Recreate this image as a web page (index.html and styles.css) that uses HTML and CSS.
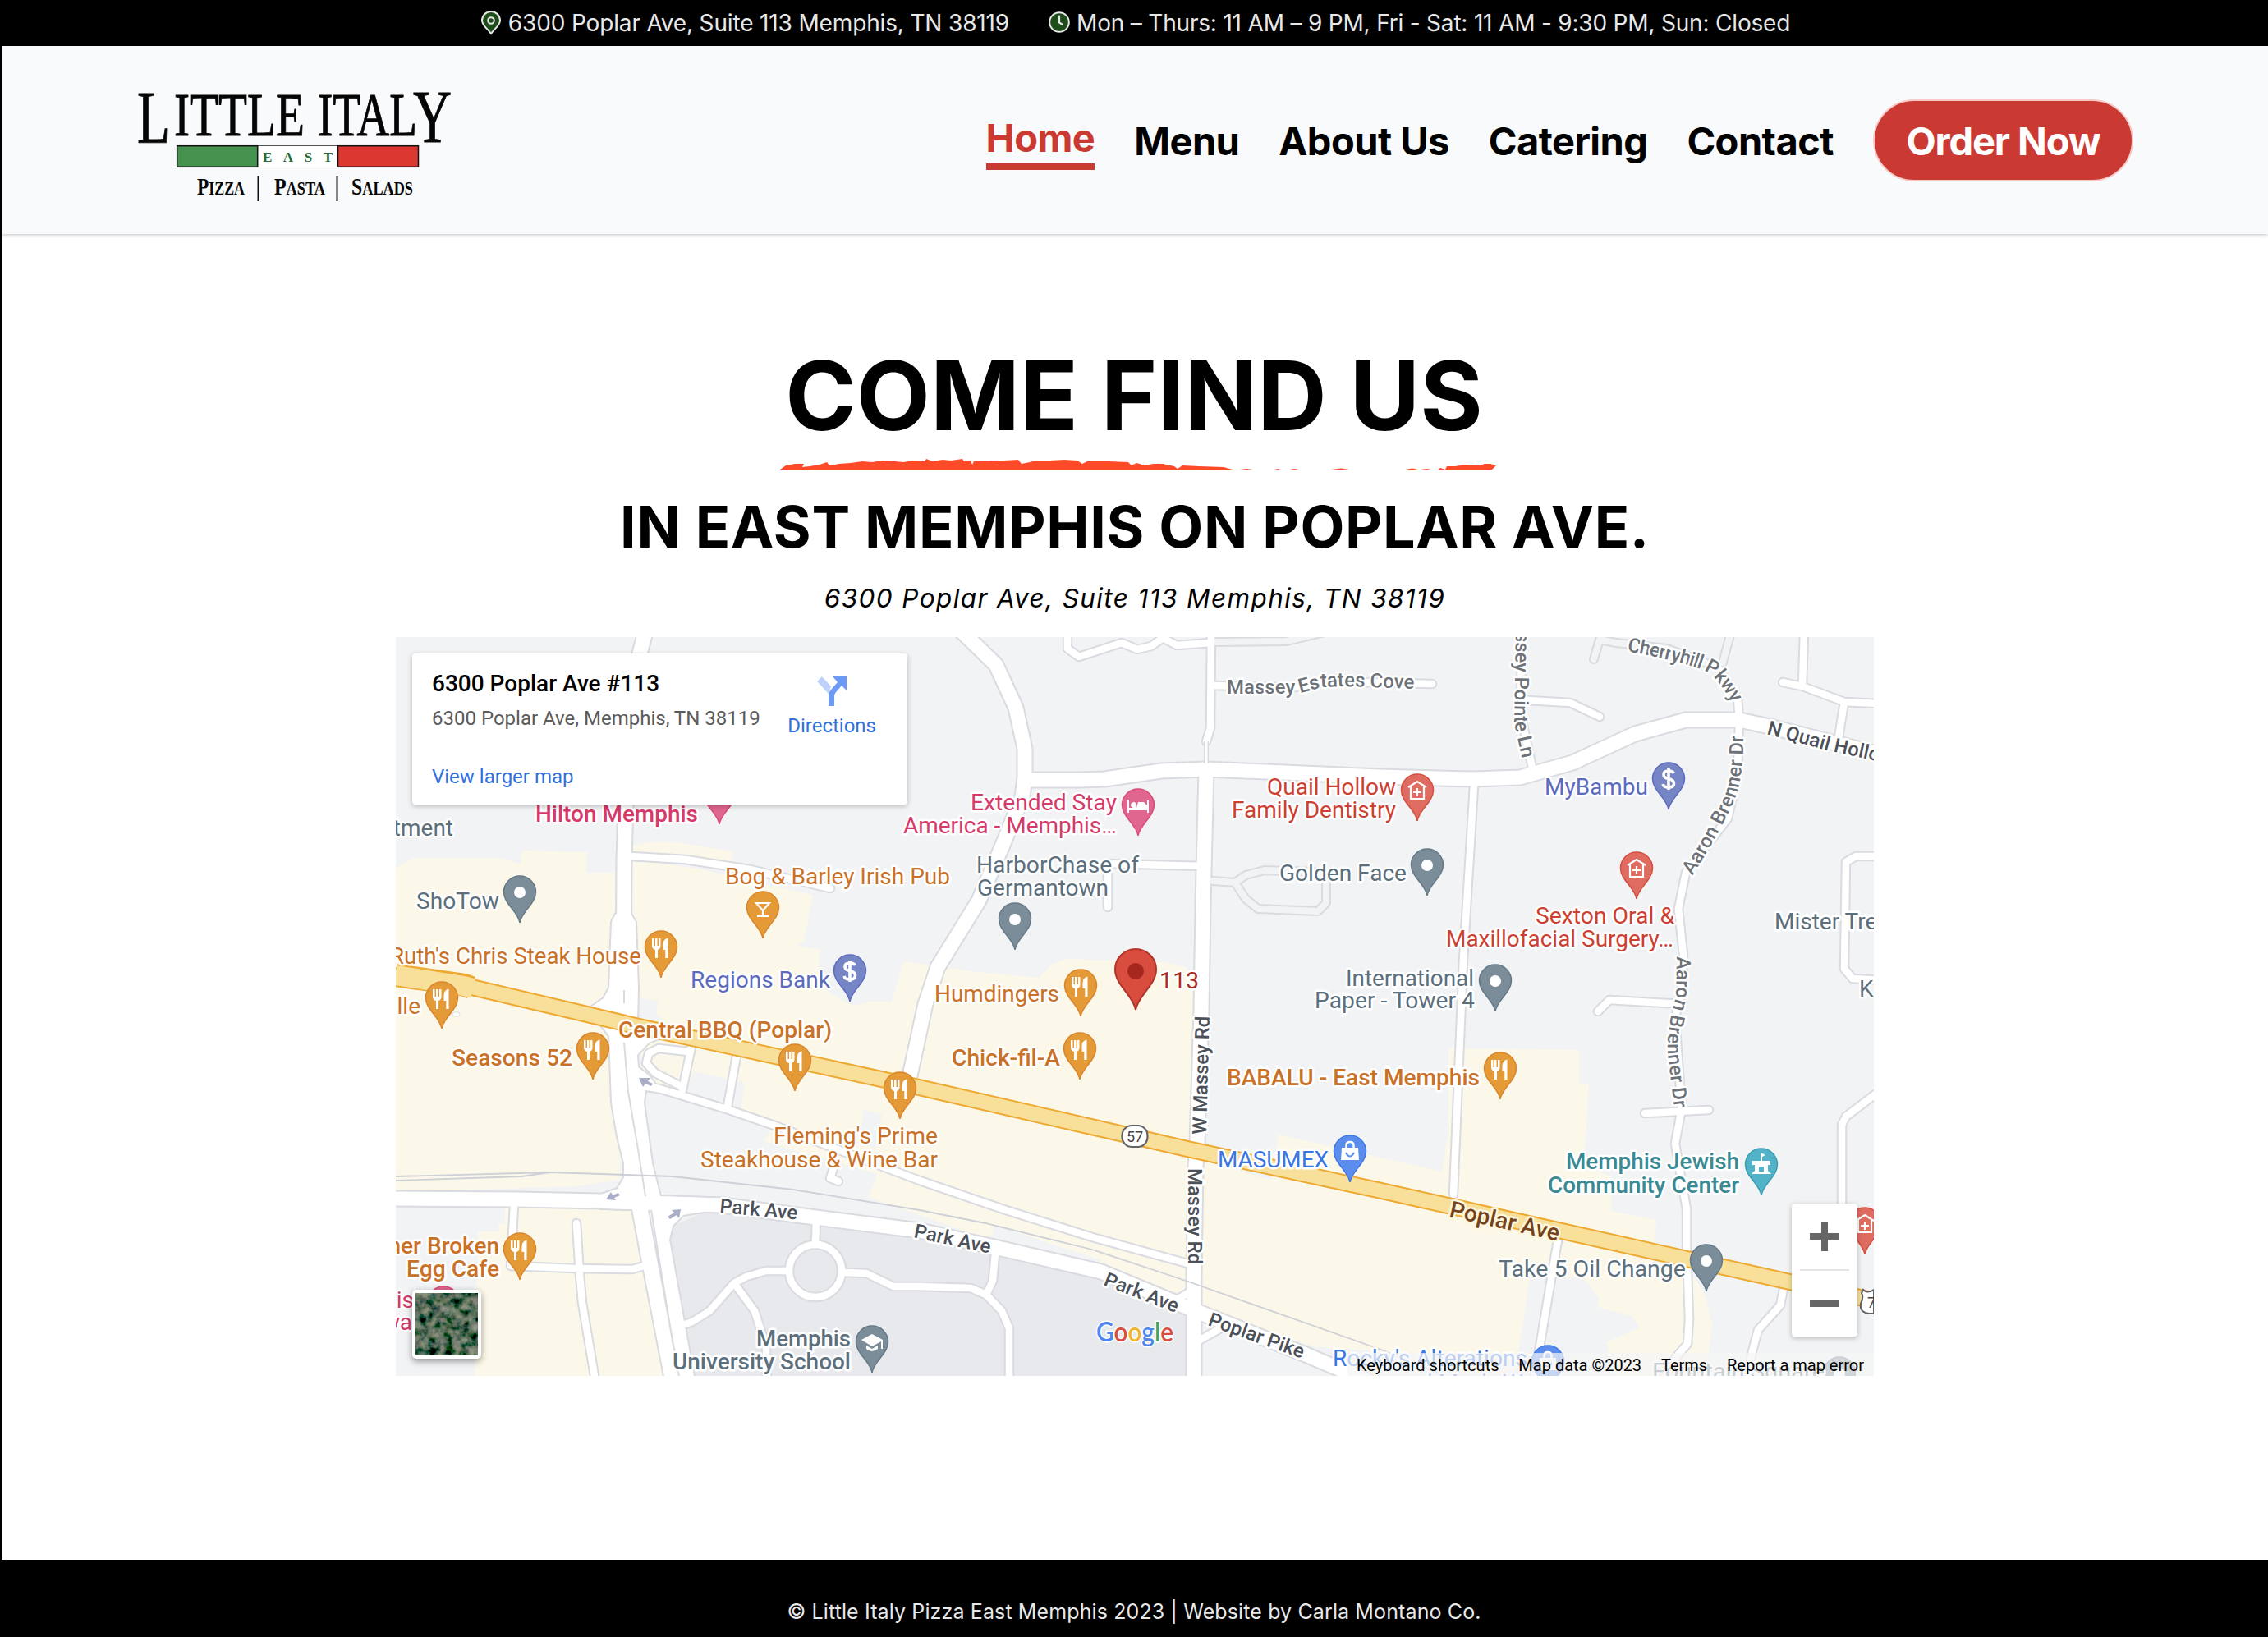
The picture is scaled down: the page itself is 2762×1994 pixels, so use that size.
FILE: index.html
```html
<!DOCTYPE html>
<html lang="en">
<head>
<meta charset="utf-8">
<title>Little Italy East – Come Find Us</title>
<link rel="stylesheet" href="styles.css">
</head>
<body>
<div class="topbar">
  <div class="topbar-item">
    <svg class="topbar-icon" viewBox="0 0 26 30"><path d="M13 28C9 22 2 18 2 12A11 11 0 0 1 24 12C24 18 17 22 13 28Z" fill="#1f4d1a" stroke="#e8e8e8" stroke-width="2"/><circle cx="13" cy="12" r="3.800" fill="none" stroke="#e8e8e8" stroke-width="2"/></svg>
    <span class="topbar-address">6300 Poplar Ave, Suite 113 Memphis, TN 38119</span>
  </div>
  <div class="topbar-item">
    <svg class="topbar-icon" viewBox="0 0 26 30"><circle cx="13" cy="14" r="11.800" fill="#1f4d1a" stroke="#e8e8e8" stroke-width="2"/><path d="M13 6.500V14.500L17 17" fill="none" stroke="#e8e8e8" stroke-width="2.200" stroke-linecap="round"/></svg>
    <span class="topbar-hours">Mon – Thurs: 11 AM – 9 PM, Fri - Sat: 11 AM - 9:30 PM, Sun: Closed</span>
  </div>
</div>

<div class="page">
<header class="header">
  <svg class="logo" viewBox="160 100 400 160">
    <g class="logo-name">
      <text x="167" y="173.500" font-size="92" textLength="40" lengthAdjust="spacingAndGlyphs">L</text>
      <text x="212" y="165" font-size="73" textLength="159" lengthAdjust="spacingAndGlyphs">ITTLE</text>
      <text x="387" y="165" font-size="73" textLength="121" lengthAdjust="spacingAndGlyphs">ITAL</text>
      <text x="503" y="173" font-size="91" textLength="47" lengthAdjust="spacingAndGlyphs">Y</text>
    </g>
    <rect x="215.500" y="177.500" width="294" height="26" fill="#fff" stroke="#555"/>
    <rect x="215.700" y="177.700" width="98" height="25.600" fill="#45934f" stroke="#111" stroke-width="1.500"/>
    <rect x="411.500" y="177.700" width="98" height="25.600" fill="#dc3832" stroke="#111" stroke-width="1.500"/>
    <text class="logo-east" x="320" y="196.500" textLength="85">EAST</text>
    <g class="logo-tag">
      <text x="240" y="237" textLength="58" lengthAdjust="spacingAndGlyphs">P<tspan class="small">IZZA</tspan></text>
      <text x="334" y="237" textLength="62" lengthAdjust="spacingAndGlyphs">P<tspan class="small">ASTA</tspan></text>
      <text x="428" y="237" textLength="75" lengthAdjust="spacingAndGlyphs">S<tspan class="small">ALADS</tspan></text>
    </g>
    <path d="M314.500 214V245M410.500 214V245" stroke="#111" stroke-width="2"/>
  </svg>
  <nav class="nav">
    <a class="nav-link active">Home</a>
    <a class="nav-link">Menu</a>
    <a class="nav-link">About Us</a>
    <a class="nav-link">Catering</a>
    <a class="nav-link">Contact</a>
    <a class="order">Order Now</a>
  </nav>
</header>

<main class="main">
  <h1 class="title">COME FIND US</h1>
  <svg class="brush" viewBox="950 558 874 14"><path fill="#ff4a2a" d="M950 572L957 567L968 565L979 565L977 569L986 568L998 566L1007 563L1010 567L1022 565L1036 564L1050 562L1062 563L1075 561L1090 562L1100 563L1112 561L1126 562L1128 559L1136 562L1148 560L1158 561L1172 559L1174 562L1182 561L1184 566L1186 562L1205 562L1240 560L1244 565L1254 563L1262 561L1278 561L1296 560L1312 561L1318 565L1324 562L1350 562L1374 563L1378 567L1384 564L1394 567L1404 565L1416 565L1430 568L1434 571L1440 567L1460 568L1490 569L1501 572ZM1510 572L1518 571L1527 572ZM1552 572L1556 571L1560 572ZM1571 572L1576 571L1582 572ZM1621 572L1633 570.500L1643 572ZM1711 572L1720 570.500L1727 572ZM1730 572L1738 571L1743 572ZM1751 572L1754 570L1760 572L1762 568L1772 568L1785 566L1802 567L1808 565L1815 565L1822 567L1817 572Z"/></svg>
  <h2 class="subtitle">IN EAST MEMPHIS ON POPLAR AVE.</h2>
  <p class="address">6300 Poplar Ave, Suite 113 Memphis, TN 38119</p>

  <section class="map">
    <svg class="map-canvas" viewBox="482 776 1800 900">
      <defs>
        <path id="pin" d="M0 0C-2 -14 -19.500 -23 -19.500 -37.500A19.500 19.500 0 0 1 19.500 -37.500C19.500 -23 2 -14 0 0Z"/>
        <g id="dot"><use href="#pin"/><circle cy="-37" r="7" fill="#fff" stroke="none"/></g>
        <g id="food"><use href="#pin"/><path stroke="none" fill="#fff" d="M-11 -48h2.500v9h1.500v-9h2.500v9h1.500v-9h2.500v9q0 4 -3.500 5v10h-3v-10q-4 -1 -4 -5zM2.500 -41q0 -6 6 -7.500v24.500h-3.200v-10h-2.800z"/></g>
        <g id="bank"><use href="#pin"/><path d="M6.500 -44Q5 -47 0 -47Q-6 -47 -6 -42.500Q-6 -38.500 0 -37.500Q6.500 -36 6.500 -31.500Q6.500 -27 0 -27Q-6 -27 -7 -31M0 -50V-24" fill="none" stroke="#fff" stroke-width="3.600"/></g>
        <g id="clinic"><use href="#pin"/><path d="M-8 -42V-27H8V-42M-11 -41L0 -48L11 -41M0 -40V-30M-5 -35H5" fill="none" stroke="#fff" stroke-width="2.200"/></g>
        <g id="bag"><use href="#pin"/><path d="M-10 -42H10L11 -27H-11Z" fill="#fff" stroke="none"/><path d="M-4.500 -42V-45Q-4.500 -49 0 -49Q4.500 -49 4.500 -45V-42" fill="none" stroke="#fff" stroke-width="2.400"/><path d="M-5 -36Q0 -27 5 -36" fill="none" stroke="#5b8def" stroke-width="2.200"/></g>
      </defs>
      <rect x="482" y="776" width="1800" height="900" fill="#f1f3f5"/>

      <!-- commercial blocks -->
      <g fill="#fcf8e9">
        <path d="M482 1057L504 1045H611L634 1053L635 1036L715 1038L714 1063H755V1437L702 1445L482 1452Z"/>
        <path d="M615 1465V1491H607V1500H582L580 1587L578 1676H812L775 1465Z"/>
        <path d="M770 1030L790 1026H823L894 1037L890 1050L770 1043Z"/>
        <path d="M768 1047L851 1058L929 1077L990 1090L979 1147L970 1152L999 1157L995 1197L1015 1213L1039 1225L1060 1220H1086L1100 1171L1190 1184L1265 1191L1280 1175L1299 1168L1418 1172L1443 1178L1462 1195V1400L1553 1407L1557 1382L1680 1410L1756 1427L1764 1380V1277L1923 1279V1319L1935 1320L1929 1420L1962 1433V1475L2017 1486L2013 1540L2065 1557L2077 1580L2085 1613L2077 1676H1968L1956 1635L1997 1617L1987 1603L1945 1592L1948 1582L1929 1557L1863 1553L1845 1676L1689 1647L1597 1640L1462 1590L1430 1580L1339 1546L1341 1535L1211 1492L1207 1509L1196 1507L1058 1458L1068 1430L929 1390L945 1370L785 1322L776 1240Z"/>
      </g>
      <g fill="#f1f3f5">
        <path d="M776 1215L802 1219L799 1236L812 1245L776 1240ZM845 1305L907 1319L902 1353L835 1330ZM1051 1352L1074 1357L1066 1400L1047 1390Z"/>
        <path d="M1479 1412L1550 1428L1547 1437L1479 1418Z"/>
      </g>
      <path fill="#e8e9ed" d="M857 1477L819 1493L815 1510L845 1676H1454V1600L1341 1553L1211 1522L1100 1500L900 1475Z"/>

      <!-- road centre lines, grouped by width -->
      <defs>
        <g id="wide">
          <path d="M786 770L779 796L762 980L760 1047L759 1240"/>
          <path d="M482 1460L631 1461L729 1463L804 1466L880 1468L970 1480L1120 1499L1211 1519L1341 1549L1433 1587L1454 1596L1590 1650L1665 1682"/>
          <path d="M1172 770L1213 810L1237 862L1248 912V947L1245 970L1222 1027L1192 1097L1142 1178L1127 1223L1107 1315"/>
          <path d="M1250 950H1314L1345 949L1414 939L1469 937L1680 946L1793 949L1851 947L1915 929L1991 894L2053 877H2118L2155 885L2290 919"/>
          <path d="M1469 937L1465 1103L1463 1230L1458 1393L1456 1420L1454 1553V1682"/>
        </g>
        <g id="narrow">
          <path d="M1475 770L1474 887L1469 903"/>
          <path d="M1300 770V790L1314 800L1366 783L1385 791L1402 787L1416 777L1433 786L1475 783"/>
          <path d="M1475 835L1578 837L1617 830L1744 833"/>
          <path d="M1795 957L1782 1170L1770 1455"/>
          <path d="M1853 770L1852 870L1867 940M1860 853L1912 856L1948 873"/>
          <path d="M2092 813L2116 850L2118 877M2118 877L2116 943L2104 997L2053 1063L2044 1107L2050 1163L2048 1203L2040 1240L2048 1350L2040 1393L2054 1473V1520L2057 1607L2055 1637L2042 1652L2025 1680"/>
          <path d="M2003 1356L2081 1352M1946 1232L1960 1218L2048 1223"/>
          <path d="M2197 770L2195 835M2171 831L2195 836L2246 855L2290 857M2246 855L2238 905"/>
          <path d="M2290 1043H2260L2248 1050L2246 1180L2256 1192L2290 1194"/>
          <path d="M2290 1328L2248 1360L2243 1370V1560M2172 1570L2168 1590L2141 1620L2133 1650L2128 1682"/>
          <path d="M1898 1505L1874 1647L1868 1682"/>
          <path d="M1465 1055L1349 1052V1105"/>
          <path d="M768 1043L835 1047L913 1059L1011 1082"/>
          <path d="M626 1468L622 1542L700 1545L770 1546L788 1541M702 1490L706 1553L709 1587L725 1682"/>
          <path d="M994 1485L993 1516M958 1548H933L909 1555L894 1563L864 1597L843 1610L829 1615M894 1563L919 1597L933 1640L934 1682"/>
          <circle cx="993" cy="1548" r="32"/>
          <path d="M1029 1550L1055 1551L1088 1567H1120L1182 1569L1201 1577L1220 1597L1229 1618V1682M1212 1527L1209 1560L1202 1575"/>
          <path d="M785 1322L806 1327L888 1352L949 1373L1051 1412L1120 1438L1222 1473L1330 1507L1450 1540"/>
          <path d="M898 1280L886 1348M843 1270L831 1328M838 1281L802 1277L790 1283L787 1295L798 1307L831 1324"/>
          <path d="M1015 1423L1011 1435L1021 1439M1425 1588L1452 1572M1458 1634L1490 1616"/>
        </g>
        <g id="private">
          <path d="M1475 782L1567 781L1613 770"/>
          <path d="M1941 803L1948 779L1968 783L2030 790L2092 813M2098 807L2108 770"/>
          <path d="M1477 1073L1504 1075L1517 1066L1540 1060L1605 1062L1615 1070V1100L1605 1110L1532 1107L1517 1095L1504 1075"/>
        </g>
        <path id="poplar" d="M476 1188L568 1201L717 1236L776 1250L1117 1324L1366 1381L1448 1400L1680 1450L2182 1562L2290 1586"/>
        <path id="station" d="M750 1113L745 1123L742 1203L735 1216L718 1228L730 1246L742 1262L745 1343L752 1385L760 1417V1434L752 1448L732 1455V1472L770 1473L782 1537L810 1682H846L815 1510L819 1493L832 1480L857 1476L890 1460L804 1457L794 1417L784 1343L786 1328L806 1331L790 1310L777 1300L776 1285L790 1270L810 1262L776 1245L777 1203L774 1123L768 1113Z"/>
      </defs>
      <use href="#private" class="road private-edge"/>
      <use href="#narrow" class="road narrow-edge"/>
      <use href="#wide" class="road wide-edge"/>
      <use href="#station" fill="#fff" stroke="#d9dbe0" stroke-width="4"/>
      <use href="#private" class="road private-fill"/>
      <use href="#narrow" class="road narrow-fill"/>
      <use href="#wide" class="road wide-fill"/>
      <use href="#station" fill="#fff"/>
      <path d="M1469 903V930" stroke="#d9dbe0" stroke-width="6"/><path d="M1469 903V932" stroke="#fff" stroke-width="3"/>
      <path d="M760 1206V1222M760 1270L765 1330L777 1400L786 1457M790 1474L827 1676M793 1474L820 1640" class="hair"/>
      <path d="M482 1438L635 1433L670 1428L762 1431L819 1433L966 1449L1120 1474L1200 1490L1330 1522L1444 1560L1682 1644L1760 1676M482 1433L670 1428" class="rail"/>
      <use href="#poplar" class="road poplar-edge"/>
      <path d="M482 1188L566 1200L574 1203" stroke="#eda932" stroke-width="28" fill="none"/>
      <use href="#poplar" class="road poplar-fill"/>
      <path d="M482 1188L565 1201L576 1204" stroke="#f8e09a" stroke-width="24" fill="none"/>
      <g fill="#a9aec6"><path d="M778 1313L792 1313L789 1317L795 1320L793 1323L786 1320L783 1324Z"/><path d="M738 1461L744 1452L746 1456L753 1453L755 1456L748 1459L750 1462Z"/><path d="M829 1473L818 1474L821 1477L813 1482L816 1485L824 1480L827 1484Z"/></g>
      <rect x="551" y="1233" width="9" height="5" rx="2.500" fill="#fff" stroke="#d9dbe0"/>

      <!-- route shields -->
      <rect x="1366.500" y="1371" width="31" height="26" rx="12" fill="#fff" stroke="#5f6368" stroke-width="2.200"/>
      <text x="1372" y="1390.500" class="shield" textLength="20">57</text>
      <path d="M2269 1571Q2274 1576 2282 1571V1600Q2264 1601 2266 1588Q2270 1580 2267 1575Z" fill="#fff" stroke="#5f6368" stroke-width="2"/>
      <text x="2274" y="1593" class="shield">7</text>

      <!-- street names -->
      <defs>
        <path id="p-estates" d="M1494 845L1572 845L1588 843L1611 837L1640 836L1725 839"/>
        <path id="p-pointe" d="M1846 770L1844 880L1856 935"/>
        <path id="p-cherry" d="M1981 793Q2060 808 2082 820Q2096 832 2113 862"/>
        <path id="p-aaron1" d="M2061 1067Q2109 990 2117 960Q2124 930 2123 890"/>
        <path id="p-aaron2" d="M2042 1165L2041 1215Q2026 1262 2033 1300L2040 1360"/>
        <path id="p-quail" d="M2151 894L2225 914L2300 930"/>
      </defs>
      <g class="street">
        <text transform="translate(876 1477) rotate(5)" textLength="95">Park Ave</text>
        <text transform="translate(1112 1507) rotate(12)" textLength="95">Park Ave</text>
        <text transform="translate(1343 1565) rotate(21)" textLength="95">Park Ave</text>
        <text transform="translate(1470 1614) rotate(19.500)" textLength="122">Poplar Pike</text>
        <text transform="translate(1469 1382) rotate(-88.500)" textLength="144">W Massey Rd</text>
        <text transform="translate(1447 1423) rotate(90)" textLength="117">Massey Rd</text>
        <text><textPath href="#p-quail">N Quail Hollow</textPath></text>
        <text class="poplar-name" transform="translate(1764 1482) rotate(12.500)" textLength="136">Poplar Ave</text>
      </g>
      <g class="street minor">
        <text textLength="229"><textPath href="#p-estates">Massey Estates Cove</textPath></text>
        <text textLength="155"><textPath href="#p-pointe">ssey Pointe Ln</textPath></text>
        <text textLength="151"><textPath href="#p-cherry">Cherryhill Pkwy</textPath></text>
        <text textLength="186"><textPath href="#p-aaron1">Aaron Brenner Dr</textPath></text>
        <text textLength="186"><textPath href="#p-aaron2">Aaron Brenner Dr</textPath></text>
      </g>

      <!-- pins -->
      <g class="slate-pin">
        <use href="#dot" x="633" y="1124"/><use href="#dot" x="1236" y="1157"/><use href="#dot" x="1738" y="1091"/><use href="#dot" x="1821" y="1232"/><use href="#dot" x="2078" y="1573"/><use href="#dot" x="2240" y="1710"/>
        <use href="#pin" x="1062" y="1672"/><path stroke="none" fill="#fff" d="M1049 1632L1062 1625L1075 1632V1643H1073V1634L1062 1640ZM1055 1639L1062 1643L1069 1639V1643Q1062 1649 1055 1643Z"/>
      </g>
      <g class="food-pin">
        <use href="#food" x="805" y="1191"/><use href="#food" x="538" y="1253"/><use href="#food" x="722" y="1315"/><use href="#food" x="968" y="1329"/><use href="#food" x="1096" y="1363"/><use href="#food" x="633" y="1559"/><use href="#food" x="1316" y="1238"/><use href="#food" x="1315" y="1315"/><use href="#food" x="1827" y="1339"/>
        <use href="#pin" x="929" y="1143"/><path fill="none" stroke="#fff" stroke-width="2.200" d="M921 1100H937L929 1109ZM929 1108V1116M922 1116H936"/>
      </g>
      <g class="bank-pin"><use href="#bank" x="1035" y="1220"/><use href="#bank" x="2032" y="986"/></g>
      <g class="clinic-pin"><use href="#clinic" x="1726" y="1000"/><use href="#clinic" x="1993" y="1095"/><use href="#clinic" x="2271" y="1528"/></g>
      <g class="hotel-pin">
        <use href="#pin" x="876" y="1004"/><use href="#pin" x="540" y="1624"/>
        <use href="#pin" x="1386" y="1018"/><path stroke="none" fill="#fff" d="M1373 974H1375V984H1380Q1377 983 1377 980Q1378 977 1381 977Q1384 977 1384 984L1386 977H1393L1397 981V975H1399V990H1397V987H1375V990H1373Z"/>
      </g>
      <g class="shop-pin"><use href="#bag" x="1644" y="1440"/><use href="#bag" x="1885" y="1696"/></g>
      <g class="civic-pin"><use href="#pin" x="2145" y="1456"/><path stroke="none" fill="#fff" d="M2144 1404L2150 1407L2146 1409V1414H2156V1419H2153V1426L2157 1430H2133L2137 1426V1419H2134V1414H2144Z"/><rect x="2142" y="1421" width="6" height="6" fill="#52b2c8" stroke="none"/></g>
      <path d="M1383 1230C1380 1212 1358 1200 1358 1181A25 25 0 0 1 1408 1181C1408 1200 1386 1212 1383 1230Z" fill="#d84d3e" stroke="#b3342a" stroke-width="2"/>
      <circle cx="1383" cy="1183" r="10" fill="#a5271d"/>

      <!-- place names -->
      <g transform="translate(0 .8)">
      <g class="label hotel">
        <text class="strong" x="652" y="1000" textLength="198" lengthAdjust="spacingAndGlyphs">Hilton Memphis</text>
        <text x="1182" y="986" textLength="178" lengthAdjust="spacingAndGlyphs">Extended Stay</text>
        <text x="1100" y="1014" textLength="260" lengthAdjust="spacingAndGlyphs">America - Memphis…</text>
        <text x="504" y="1592" text-anchor="end">is</text><text x="502" y="1619" text-anchor="end">va</text>
      </g>
      <g class="label slate">
        <text x="552" y="1017" text-anchor="end">tment</text>
        <text x="507" y="1106" textLength="101" lengthAdjust="spacingAndGlyphs">ShoTow</text>
        <text x="1189" y="1062" textLength="198" lengthAdjust="spacingAndGlyphs">HarborChase of</text>
        <text x="1190" y="1090" textLength="160" lengthAdjust="spacingAndGlyphs">Germantown</text>
        <text x="1558" y="1072" textLength="155" lengthAdjust="spacingAndGlyphs">Golden Face</text>
        <text x="1639" y="1200" textLength="156" lengthAdjust="spacingAndGlyphs">International</text>
        <text x="1601" y="1227" textLength="195" lengthAdjust="spacingAndGlyphs">Paper - Tower 4</text>
        <text x="2161" y="1131">Mister Tree</text><text x="2264" y="1213">K</text>
        <text x="1825" y="1554" class="mid" textLength="228" lengthAdjust="spacingAndGlyphs">Take 5 Oil Change</text>
        <text x="921" y="1639" class="strong" textLength="115" lengthAdjust="spacingAndGlyphs">Memphis</text>
        <text x="819" y="1667" class="strong" textLength="217" lengthAdjust="spacingAndGlyphs">University School</text>
        <text x="2012" y="1679" textLength="210" lengthAdjust="spacingAndGlyphs">Fountain Square</text>
      </g>
      <g class="label food">
        <text x="475" y="1173" textLength="306" lengthAdjust="spacingAndGlyphs">Ruth's Chris Steak House</text>
        <text x="883" y="1076" textLength="274" lengthAdjust="spacingAndGlyphs">Bog &amp; Barley Irish Pub</text>
        <text x="512" y="1234" text-anchor="end">ille</text>
        <text x="550" y="1297" class="strong" textLength="147" lengthAdjust="spacingAndGlyphs">Seasons 52</text>
        <text x="753" y="1263" class="strong" textLength="260" lengthAdjust="spacingAndGlyphs">Central BBQ (Poplar)</text>
        <text x="942" y="1392" textLength="200" lengthAdjust="spacingAndGlyphs">Fleming's Prime</text>
        <text x="853" y="1421" textLength="289" lengthAdjust="spacingAndGlyphs">Steakhouse &amp; Wine Bar</text>
        <text x="608" y="1526" class="strong" text-anchor="end">ner Broken</text>
        <text x="495" y="1554" class="strong" textLength="113" lengthAdjust="spacingAndGlyphs">Egg Cafe</text>
        <text x="1138" y="1219" textLength="152" lengthAdjust="spacingAndGlyphs">Humdingers</text>
        <text x="1159" y="1297" class="strong" textLength="132" lengthAdjust="spacingAndGlyphs">Chick-fil-A</text>
        <text x="1494" y="1321" class="strong" textLength="308" lengthAdjust="spacingAndGlyphs">BABALU - East Memphis</text>
      </g>
      <g class="label bank">
        <text x="841" y="1202" textLength="170" lengthAdjust="spacingAndGlyphs">Regions Bank</text>
        <text x="1881" y="967" textLength="126" lengthAdjust="spacingAndGlyphs">MyBambu</text>
      </g>
      <g class="label clinic">
        <text x="1543" y="967" textLength="157" lengthAdjust="spacingAndGlyphs">Quail Hollow</text>
        <text x="1500" y="995" textLength="200" lengthAdjust="spacingAndGlyphs">Family Dentistry</text>
        <text x="1870" y="1124" textLength="169" lengthAdjust="spacingAndGlyphs">Sexton Oral &amp;</text>
        <text x="1761" y="1152" textLength="277" lengthAdjust="spacingAndGlyphs">Maxillofacial Surgery…</text>
      </g>
      <g class="label shop">
        <text x="1483" y="1421" class="mid" textLength="135" lengthAdjust="spacingAndGlyphs">MASUMEX</text>
        <text x="1623" y="1663" class="mid" textLength="237" lengthAdjust="spacingAndGlyphs">Rocky's Alterations</text>
        <text x="1698" y="1693">and Men's W</text>
      </g>
      <g class="label civic">
        <text x="1907" y="1423" class="strong" textLength="211" lengthAdjust="spacingAndGlyphs">Memphis Jewish</text>
        <text x="1885" y="1452" class="strong" textLength="233" lengthAdjust="spacingAndGlyphs">Community Center</text>
      </g>
      <g class="label"><text x="1412" y="1203" fill="#a82a20" textLength="48">113</text></g>
      </g>
      <text class="google" x="1335" y="1634" textLength="94" lengthAdjust="spacingAndGlyphs"><tspan fill="#4c86ee">G</tspan><tspan fill="#d94c40">o</tspan><tspan fill="#efb632">o</tspan><tspan fill="#4c86ee">g</tspan><tspan fill="#4ba35a">l</tspan><tspan fill="#d94c40">e</tspan></text>
    </svg>

    <div class="place-card">
      <div class="place-info">
        <div class="place-name">6300 Poplar Ave #113</div>
        <div class="place-address">6300 Poplar Ave, Memphis, TN 38119</div>
        <a class="place-link">View larger map</a>
      </div>
      <a class="directions">
        <svg viewBox="0 0 36 36"><path d="M0 6L6 0L17 12L14 21Z" fill="#bdd1fb"/><path d="M14 36V24Q14 19 17 16L25 7L19 0H36V17L30 11L23 19Q21 21 21 25V36Z" fill="#6c9af5"/></svg>
        Directions
      </a>
    </div>

    <svg class="satellite" viewBox="0 0 84 84">
      <filter id="ground" x="0" y="0" width="100%" height="100%"><feTurbulence type="fractalNoise" baseFrequency=".1" numOctaves="4" seed="8"/><feColorMatrix values=".75 .1 0 0 -.11  .6 .2 0 0 -.07  .5 .1 .1 0 -.08  0 0 0 0 1"/><feComponentTransfer><feFuncR type="linear" slope=".85" intercept="-.17"/><feFuncG type="linear" slope=".85" intercept="-.13"/><feFuncB type="linear" slope=".85" intercept="-.13"/></feComponentTransfer></filter>
      <rect width="84" height="84" rx="5" fill="#fff"/><rect x="4" y="4" width="76" height="76" fill="#4b5549" filter="url(#ground)"/>
    </svg>

    <div class="zoom">
      <svg viewBox="0 0 36 36"><path d="M14 0h8v14h14v8H22v14h-8V22H0v-8h14z" fill="#666"/></svg>
      <div class="zoom-line"></div>
      <svg viewBox="0 0 36 36"><path d="M0 14h36v8H0z" fill="#666"/></svg>
    </div>

    <div class="attribution"><span>Keyboard shortcuts</span><span>Map data ©2023</span><span>Terms</span><span>Report a map error</span></div>
  </section>
</main>
</div>

<footer class="footer">© Little Italy Pizza East Memphis 2023 | Website by Carla Montano Co.</footer>
</body>
</html>
```
FILE: styles.css
```css
* { box-sizing: border-box; }
body { margin: 0; width: 2762px; height: 1994px; display: flex; flex-direction: column; overflow: hidden; background: #fff; color: #000; font-family: Inter, "Liberation Sans", sans-serif; }
svg { display: block; }

.topbar { height: 56px; flex: none; display: flex; justify-content: center; gap: 48px; background: #000; color: #e8e8e8; font-size: 28px; line-height: 57px; white-space: nowrap; padding-left: 3px; }
.topbar-item { display: flex; align-items: center; gap: 8px; }
.topbar-icon { width: 26px; height: 30px; }
.topbar-address { letter-spacing: -.15px; }
.topbar-hours { letter-spacing: -.19px; }

.page { flex: 1; min-height: 0; border-left: 2px solid #000; }
.header { height: 229px; display: flex; justify-content: space-between; align-items: flex-start; padding: 44px 164px 0 158px; background: #f9fafc; box-shadow: 0 1px 5px rgba(0, 0, 0, .25); position: relative; }
.logo { width: 400px; height: 160px; overflow: visible; }
.logo-name { font-family: "Liberation Serif", serif; fill: #050505; stroke: #050505; stroke-width: .9px; }
.logo-east { font: bold 17px "Liberation Serif", serif; fill: #2a6b3a; }
.logo-tag { font: bold 30px "Liberation Serif", serif; fill: #050505; }
.logo-tag .small { font-size: 23px; }

.nav { display: flex; align-items: center; gap: 48px; margin-top: 21px; height: 100px; font-size: 47px; font-weight: 700; letter-spacing: -.55px; line-height: 56px; white-space: nowrap; }
.nav-link { padding-top: 2px; }
.nav-link.active { color: #cb3a32; border-bottom: 8px solid #cb3a32; padding: 0 0 3px; margin-top: 5px; }
.order { display: flex; align-items: center; justify-content: center; width: 317px; height: 100px; padding-top: 2px; border: 2px solid #f6c9c7; border-radius: 50px; background: #cb3a32; color: #fff; letter-spacing: -1.100px; }

.main { display: flex; flex-direction: column; align-items: center; padding-top: 140px; }
.title { margin: 0 2px 0 0; font-size: 117px; font-weight: 700; line-height: 113px; height: 133px; white-space: nowrap; }
.brush { width: 874px; height: 14px; margin-left: 9px; }
.subtitle { margin: 32px 0 0; font-size: 70px; font-weight: 700; line-height: 76px; letter-spacing: .7px; white-space: nowrap; }
.address { margin: 29px 0 0; font-size: 31.500px; line-height: 40px; height: 67px; font-style: italic; letter-spacing: 1.400px; white-space: nowrap; }

.map { position: relative; width: 1800px; height: 900px; overflow: hidden; font-family: Roboto, sans-serif; }
.map-canvas { width: 1800px; height: 900px; }
.road { fill: none; stroke-linecap: round; stroke-linejoin: round; }
.wide-edge { stroke: #d9dbe0; stroke-width: 21px; }
.wide-fill { stroke: #fff; stroke-width: 17px; }
.narrow-edge { stroke: #d9dbe0; stroke-width: 12.500px; }
.narrow-fill { stroke: #fff; stroke-width: 8.500px; }
.private-edge { stroke: #d9dbde; stroke-width: 12px; }
.private-fill { stroke: #f1f3f5; stroke-width: 8px; }
.poplar-edge { stroke: #eda932; stroke-width: 21px; }
.poplar-fill { stroke: #f8e09a; stroke-width: 17px; }
.hair { fill: none; stroke: #d9dbe0; stroke-width: 2px; }
.rail { fill: none; stroke: #cdd0d6; stroke-width: 1.800px; }
.shield { font-size: 18px; fill: #444; }
.street { font-size: 24px; font-weight: 500; fill: #4c5159; stroke: #fff; stroke-width: 5px; paint-order: stroke; stroke-linejoin: round; }
.street.minor { fill: #6d7279; }
.poplar-name { font-size: 28px; fill: #75431b; stroke: #fdf6dc; }
.label { font-size: 28px; stroke: #fff; stroke-width: 5px; paint-order: stroke; stroke-linejoin: round; }
.strong { font-weight: 500; }
.mid { font-weight: 450; }
.hotel { fill: #d63a6a; }
.slate { fill: #5b6f7d; }
.food { fill: #c97127; }
.bank { fill: #5c6bbd; }
.clinic { fill: #cc3f31; }
.shop { fill: #3a76e3; }
.civic { fill: #3a8a94; }
.slate-pin { fill: #7b8d99; stroke: #647886; stroke-width: 1.500px; }
.food-pin { fill: #e49b37; stroke: #d9852b; stroke-width: 1.500px; }
.bank-pin { fill: #7685c5; stroke: #5c6bbd; stroke-width: 1.500px; }
.clinic-pin { fill: #de6c61; stroke: #d54e40; stroke-width: 1.500px; }
.hotel-pin { fill: #e0668f; stroke: #db4a79; stroke-width: 1.500px; }
.shop-pin { fill: #5b8def; stroke: #3f78e4; stroke-width: 1.500px; }
.civic-pin { fill: #52b2c8; stroke: #3c9db0; stroke-width: 1.500px; }
.google { font: 600 33px Lato, sans-serif; stroke: #fff; stroke-width: 3px; paint-order: stroke; }

.place-card { position: absolute; left: 20px; top: 20px; width: 603px; height: 184px; display: flex; justify-content: space-between; padding: 20px 38px 0 24px; background: #fff; border-radius: 4px; box-shadow: 0 2px 6px rgba(0, 0, 0, .25); font-size: 24px; white-space: nowrap; }
.place-name { font-size: 28px; font-weight: 500; line-height: 34px; }
.place-address { color: #5b5b5b; line-height: 30px; margin-top: 10px; }
.place-link { display: block; color: #2f71de; line-height: 30px; margin-top: 41px; }
.directions { display: flex; flex-direction: column; align-items: center; gap: 9px; padding-top: 8px; color: #2f71de; line-height: 30px; }
.directions svg { width: 36px; height: 36px; }
.satellite { position: absolute; left: 20px; top: 795px; width: 84px; height: 84px; border-radius: 5px; box-shadow: 0 3px 9px rgba(0, 0, 0, .4); }
.zoom { position: absolute; left: 1700px; top: 690px; width: 80px; height: 162px; display: flex; flex-direction: column; align-items: center; justify-content: space-between; padding: 22px 10px; background: #fff; border-radius: 4px; box-shadow: 0 2px 6px rgba(0, 0, 0, .25); }
.zoom svg { width: 36px; height: 36px; }
.zoom-line { width: 60px; height: 2px; background: #e4e4e4; }
.attribution { position: absolute; right: 0; bottom: 0; width: 641px; height: 28px; display: flex; justify-content: space-between; padding: 0 12px 0 11px; background: rgba(245, 245, 245, .7); font-size: 20px; line-height: 30px; color: #000; white-space: nowrap; }

.footer { flex: none; height: 94px; background: #000; color: #e8e8e8; font-size: 25px; line-height: 126px; letter-spacing: .12px; text-align: center; white-space: nowrap; overflow: hidden; }
```
